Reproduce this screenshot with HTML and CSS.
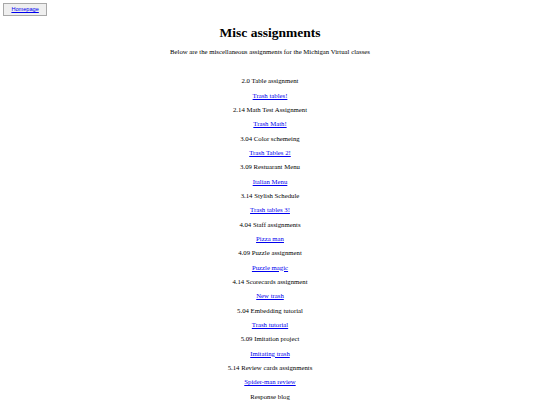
FILE: index.html
```html
<!DOCTYPE html>
<html>
<head>
<meta charset="utf-8">
<title>Misc assignments</title>
<link rel="stylesheet" href="styles.css">
</head>
<body class="page">
<button class="home-btn"><a href="#">Homepage</a></button>
<h1 class="title">Misc assignments</h1>
<p class="intro">Below are the miscellaneous assignments for the Michigan Virtual classes</p>
<div class="list">
<p>2.0 Table assignment</p>
<p><a href="#">Trash tables!</a></p>
<p>2.14 Math Test Assignment</p>
<p><a href="#">Trash Math!</a></p>
<p>3.04 Color schemeing</p>
<p><a href="#">Trash Tables 2!</a></p>
<p>3.09 Restuarant Menu</p>
<p><a href="#">Italian Menu</a></p>
<p>3.14 Stylish Schedule</p>
<p><a href="#">Trash tables 3!</a></p>
<p>4.04 Staff assignments</p>
<p><a href="#">Pizza man</a></p>
<p>4.09 Puzzle assignment</p>
<p><a href="#">Puzzle magic</a></p>
<p>4.14 Scorecards assignment</p>
<p><a href="#">New trash</a></p>
<p>5.04 Embedding tutorial</p>
<p><a href="#">Trash tutorial</a></p>
<p>5.09 Imitation project</p>
<p><a href="#">Imitating trash</a></p>
<p>5.14 Review cards assignments</p>
<p><a href="#">Spider-man review</a></p>
<p>Response blog</p>
<p><a href="#">Blog</a></p>
</div>
</body>
</html>
```
FILE: styles.css
```css
html {
  background: #ffffff;
}
.page {
  margin: 3.375px;
  font-family: "Liberation Serif", "Times New Roman", serif;
  font-size: 6.75px;
  color: #000000;
  text-align: center;
}
.home-btn {
  display: block;
  font-family: "Liberation Sans", Arial, sans-serif;
  font-size: 5.625px;
  line-height: 6.5px;
  padding: 2px 7px;
  background: #efefef;
  border: 1px solid #a8a8a8;
  border-radius: 0;
}
.home-btn a {
  color: #0000ee;
}
.title {
  font-size: 13.5px;
  line-height: 15.5px;
  margin: 9.5px 0 7.5px;
}
.intro {
  line-height: 7.6px;
  margin: 6.75px 0 21.25px;
}
.list p {
  line-height: 7.6px;
  margin: 6.75px 0;
}
.list a {
  color: #0000ee;
}
```
